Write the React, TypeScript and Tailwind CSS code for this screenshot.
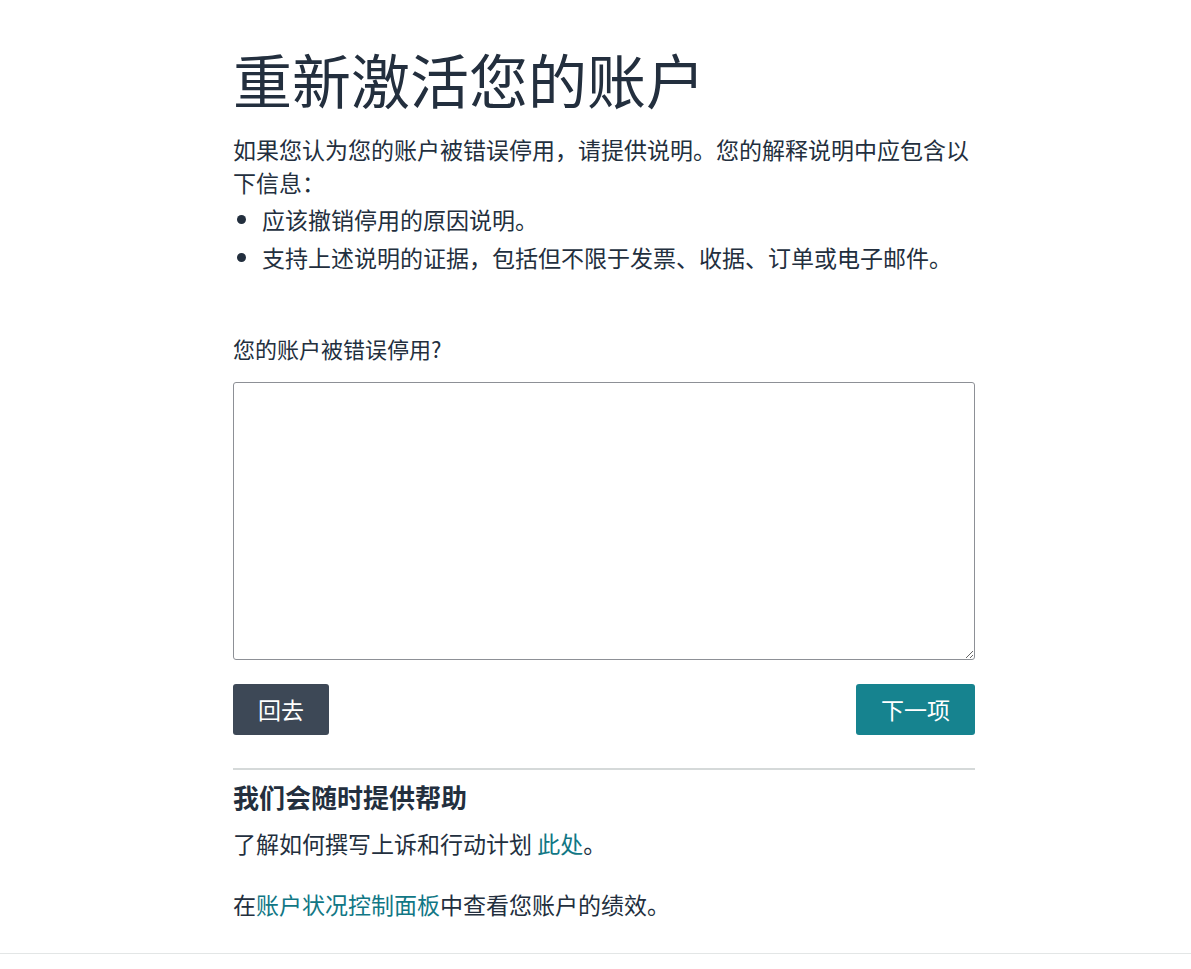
export default function App() {
  return (
    <div className="w-full min-h-[969px] bg-white text-[#232f3e] font-['Noto_Sans_CJK_SC','Noto_Sans',sans-serif]">
      <div className="ml-[233px] w-[742px] pt-[42px]">
        <h1 className="text-[59px] leading-[74px] font-normal">重新激活您的账户</h1>
        <p className="mt-[17px] text-[23px] leading-[33px]">
          如果您认为您的账户被错误停用，请提供说明。您的解释说明中应包含以下信息：
        </p>
        <ul className="mt-[1px] list-disc pl-[29px] text-[23px] leading-[38px]">
          <li>应该撤销停用的原因说明。</li>
          <li>支持上述说明的证据，包括但不限于发票、收据、订单或电子邮件。</li>
        </ul>
        <label className="block mt-[56px] text-[22px] leading-[32px]">您的账户被错误停用?</label>
        <textarea className="mt-[18px] block w-full h-[278px] border border-[#8d9096] rounded-[3px] p-2 text-[20px]" />
        <div className="mt-[24px] flex justify-between">
          <button className="h-[51px] px-[25px] rounded-[3px] bg-[#3d4856] text-white text-[23px]">回去</button>
          <button className="h-[51px] px-[25px] rounded-[3px] bg-[#16838f] text-white text-[23px]">下一项</button>
        </div>
        <div className="mt-[33px] border-t-2 border-[#d5d9d9] pt-[10px]">
          <h2 className="text-[26px] leading-[34px] font-bold">我们会随时提供帮助</h2>
          <p className="mt-[13px] text-[23px] leading-[33px]">
            了解如何撰写上诉和行动计划 <a className="text-[#117785]">此处</a>。
          </p>
          <p className="mt-[28px] text-[23px] leading-[33px]">
            在<a className="text-[#117785]">账户状况控制面板</a>中查看您账户的绩效。
          </p>
        </div>
      </div>
      <div className="mt-[32px] border-t border-[#e3e6e6]" />
    </div>
  );
}
